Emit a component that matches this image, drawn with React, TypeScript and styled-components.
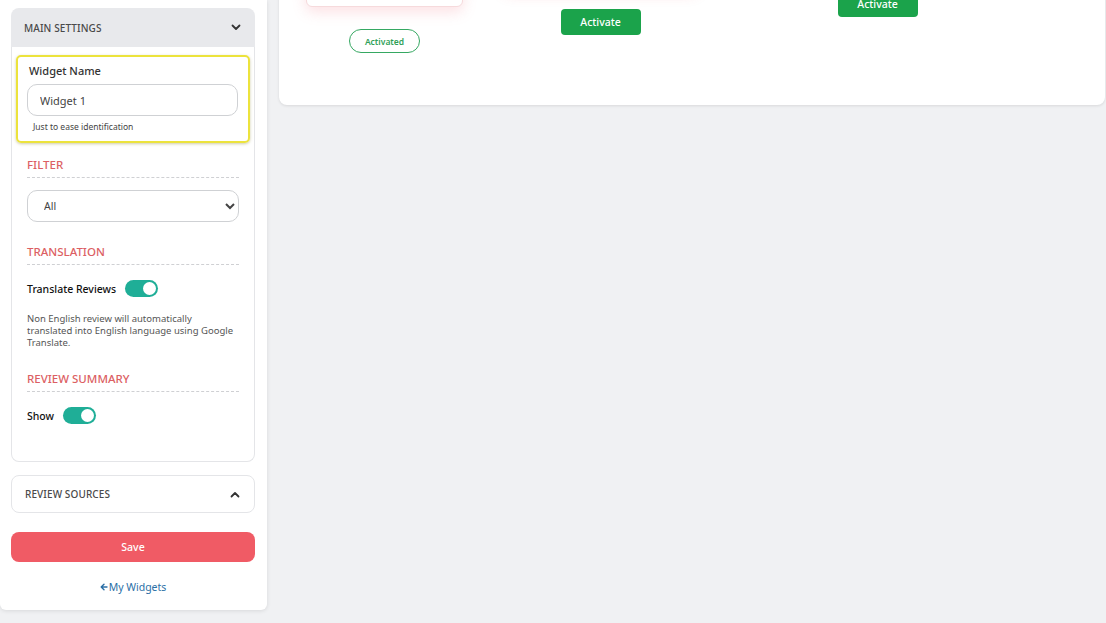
import React from "react"
import styled, { createGlobalStyle } from "styled-components"

const GlobalStyle = createGlobalStyle`
  html,
  body {
    margin: 0;
    padding: 0;
    background: #f0f1f3;
    font-family: "Noto Sans", "Open Sans", sans-serif;
    color: #222;
    overflow: hidden;
  }
  * {
    box-sizing: border-box;
  }
`

const Page = styled.div`
  display: flex;
  align-items: flex-start;
  gap: 12px;
  padding-right: 1px;
  min-height: 623px;
`

/* ---------- sidebar ---------- */

const Sidebar = styled.aside`
  width: 267px;
  flex-shrink: 0;
  background: #fff;
  border-radius: 0 0 6px 6px;
  box-shadow: 0 1px 4px rgba(0, 0, 0, 0.1);
  padding: 8px 12px 15px 11px;
  display: flex;
  flex-direction: column;
`

const AccordionHead = styled.div<{ $open?: boolean }>`
  height: ${(p) => (p.$open ? "39px" : "38px")};
  display: flex;
  align-items: center;
  justify-content: space-between;
  padding: 0 14px 0 13px;
  background: ${(p) => (p.$open ? "#e8e9ec" : "#fff")};
  border: ${(p) => (p.$open ? "none" : "1px solid #e4e5e8")};
  border-radius: ${(p) => (p.$open ? "8px 8px 0 0" : "8px")};
  font-size: 10px;
  font-weight: 500;
  color: #4a4a4a;
  letter-spacing: 0.1px;
`

const AccordionBody = styled.div`
  border: 1px solid #e4e5e8;
  border-top: none;
  border-radius: 0 0 8px 8px;
  padding: 8px 4px 37px;
`

const Highlight = styled.div`
  border: 2px solid #ece33c;
  border-radius: 5px;
  box-shadow: 0 1px 3px rgba(120, 110, 0, 0.35);
  padding: 6px 10px 8px 9px;
`

const FieldLabel = styled.div`
  font-size: 11px;
  font-weight: 500;
  color: #333;
  line-height: 16px;
  padding-left: 2px;
`

const TextInput = styled.input`
  display: block;
  width: 100%;
  height: 32px;
  margin-top: 5px;
  border: 1px solid #cfd1d4;
  border-radius: 10px;
  padding: 0 12px;
  font-family: inherit;
  font-size: 11px;
  color: #444;
  outline: none;
`

const Helper = styled.div`
  font-size: 8.5px;
  color: #444;
  line-height: 12px;
  margin-top: 5px;
  padding-left: 6px;
`

const Section = styled.div`
  padding: 0 11px;
`

const SectionTitle = styled.div<{ $gap: number }>`
  margin-top: ${(p) => p.$gap}px;
  font-size: 11.5px;
  font-weight: 500;
  color: #dc5f64;
  line-height: 16px;
  padding-bottom: 4px;
  border-bottom: 1px dashed #cfd0d3;
`

const Select = styled.select`
  display: block;
  width: 100%;
  height: 32px;
  margin-top: 12px;
  border: 1px solid #cfd1d4;
  border-radius: 10px;
  padding: 0 10px 0 12px;
  font-family: inherit;
  font-size: 10.5px;
  color: #444;
  background: #fff;
  outline: none;
`

const ToggleRow = styled.label`
  display: flex;
  align-items: center;
  gap: 9px;
  margin-top: 15px;
  font-size: 10.5px;
  font-weight: 500;
  color: #111;
`

const Track = styled.span<{ $on: boolean }>`
  width: 33px;
  height: 17px;
  border-radius: 9px;
  background: ${(p) => (p.$on ? "#1fae97" : "#c9cbd0")};
  display: flex;
  align-items: center;
  justify-content: ${(p) => (p.$on ? "flex-end" : "flex-start")};
  padding: 0 2px;
`

const Knob = styled.span`
  width: 13px;
  height: 13px;
  border-radius: 50%;
  background: #fff;
`

const Note = styled.p`
  margin: 16px 0 0;
  font-size: 9.5px;
  line-height: 12px;
  color: #555;
`

const SaveButton = styled.button`
  margin-top: 19px;
  height: 30px;
  border: none;
  border-radius: 8px;
  background: #f05b65;
  color: #fff;
  font-family: inherit;
  font-size: 10.5px;
  font-weight: 500;
`

const BackLink = styled.a`
  margin-top: 17px;
  align-self: center;
  display: flex;
  align-items: center;
  gap: 1px;
  font-size: 10.5px;
  line-height: 16px;
  color: #2b6fa6;
  text-decoration: none;
`

const Spacer = styled.div<{ $h: number }>`
  height: ${(p) => p.$h}px;
`

/* ---------- main ---------- */

const Main = styled.main`
  flex: 1;
  margin-top: -330px;
`

const Card = styled.div`
  background: #fff;
  border-radius: 8px;
  box-shadow: 0 1px 3px rgba(0, 0, 0, 0.1);
  padding: 30px 27px 52px;
  display: flex;
  align-items: flex-start;
  gap: 42px;
`

const Template = styled.div<{ $w: number }>`
  width: ${(p) => p.$w}px;
  display: flex;
  flex-direction: column;
  align-items: center;
  gap: 22px;
`

const Preview = styled.div<{ $h: number; $glow: string }>`
  width: 100%;
  height: ${(p) => p.$h}px;
  background: #fff;
  border: 1px solid #f6dadc;
  border-radius: 6px;
  box-shadow: 0 5px 14px ${(p) => p.$glow};
`

const ActivatedPill = styled.div`
  width: 71px;
  height: 24px;
  border: 1px solid #36a862;
  border-radius: 12px;
  display: flex;
  align-items: center;
  justify-content: center;
  font-size: 8.5px;
  font-weight: 600;
  color: #2f9f58;
`

const ActivateButton = styled.button`
  width: 80px;
  height: 26px;
  border: none;
  border-radius: 4px;
  background: #1ba34b;
  color: #fff;
  font-family: inherit;
  font-size: 10.5px;
  font-weight: 500;
`

const Chevron = ({ up }: { up?: boolean }) => (
  <svg width="10" height="7" viewBox="0 0 10 7">
    <polyline
      points={up ? "1.5,5.5 5,2 8.5,5.5" : "1.5,1.5 5,5 8.5,1.5"}
      fill="none"
      stroke="#333"
      strokeWidth="1.8"
      strokeLinecap="round"
      strokeLinejoin="round"
    />
  </svg>
)

const Toggle = ({ on }: { on: boolean }) => (
  <Track $on={on}>
    <Knob />
  </Track>
)

const templates = [
  { w: 157, h: 307, glow: "rgba(240, 120, 130, 0.22)", active: true },
  { w: 191, h: 287, glow: "rgba(240, 80, 90, 0.35)", active: false },
  { w: 279, h: 269, glow: "rgba(240, 80, 90, 0.3)", active: false },
]

export default function App() {
  return (
    <>
      <GlobalStyle />
      <Page>
        <Sidebar>
          <AccordionHead $open>
            MAIN SETTINGS
            <Chevron />
          </AccordionHead>
          <AccordionBody>
            <Highlight>
              <FieldLabel>Widget Name</FieldLabel>
              <TextInput defaultValue="Widget 1" />
              <Helper>Just to ease identification</Helper>
            </Highlight>

            <Section>
              <SectionTitle $gap={14}>FILTER</SectionTitle>
              <Select defaultValue="all">
                <option value="all">All</option>
              </Select>

              <SectionTitle $gap={22}>TRANSLATION</SectionTitle>
              <ToggleRow>
                Translate Reviews
                <Toggle on />
              </ToggleRow>
              <Note>
                Non English review will automatically
                <br />
                translated into English language using Google Translate.
              </Note>

              <SectionTitle $gap={22}>REVIEW SUMMARY</SectionTitle>
              <ToggleRow>
                Show
                <Toggle on />
              </ToggleRow>
            </Section>
          </AccordionBody>

          <Spacer $h={13} />
          <AccordionHead>
            REVIEW SOURCES
            <Chevron up />
          </AccordionHead>

          <SaveButton>Save</SaveButton>
          <BackLink href="#">
            <svg width="8" height="8" viewBox="0 0 8 8">
              <path
                d="M7 4H1.5M4 1.2 1.2 4 4 6.8"
                fill="none"
                stroke="#2b6fa6"
                strokeWidth="1.4"
                strokeLinecap="round"
                strokeLinejoin="round"
              />
            </svg>
            My Widgets
          </BackLink>
        </Sidebar>

        <Main>
          <Card>
            {templates.map((t, i) => (
              <Template key={i} $w={t.w}>
                <Preview $h={t.h} $glow={t.glow} />
                {t.active ? (
                  <ActivatedPill>Activated</ActivatedPill>
                ) : (
                  <ActivateButton>Activate</ActivateButton>
                )}
              </Template>
            ))}
          </Card>
        </Main>
      </Page>
    </>
  )
}
